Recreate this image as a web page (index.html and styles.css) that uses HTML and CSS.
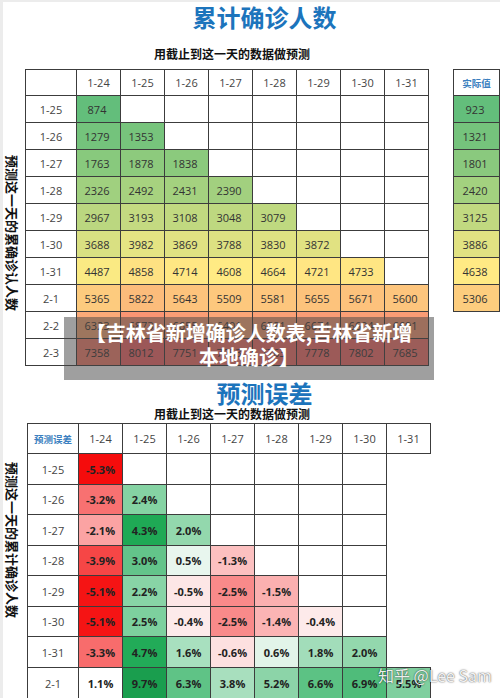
FILE: index.html
```html
<!DOCTYPE html>
<html>
  <head>
    <meta charset="utf-8">
    <link rel="stylesheet" href="styles.css">
  </head>
  <body>
    <div class="page">
      <h1 class="title">累计确诊人数</h1>
      <div class="subtitle">用截止到这一天的数据做预测</div>

      <div class="sheet">
        <div class="side side-top"><span>预测这一天的累确诊认人数</span></div>
        <div class="grid grid-total">
          <div class="cell"></div>
          <div class="cell hd">1-24</div><div class="cell hd">1-25</div><div class="cell hd">1-26</div><div class="cell hd">1-27</div>
          <div class="cell hd">1-28</div><div class="cell hd">1-29</div><div class="cell hd">1-30</div><div class="cell hd">1-31</div>

          <div class="cell rh">1-25</div>
          <div class="cell num" style="background:#63be7b">874</div>
          <div class="cell"></div><div class="cell"></div><div class="cell"></div><div class="cell"></div><div class="cell"></div><div class="cell"></div><div class="cell"></div>

          <div class="cell rh">1-26</div>
          <div class="cell num" style="background:#74c37c">1279</div>
          <div class="cell num" style="background:#77c47c">1353</div>
          <div class="cell"></div><div class="cell"></div><div class="cell"></div><div class="cell"></div><div class="cell"></div><div class="cell"></div>

          <div class="cell rh">1-27</div>
          <div class="cell num" style="background:#88c97d">1763</div>
          <div class="cell num" style="background:#8dca7d">1878</div>
          <div class="cell num" style="background:#8bca7d">1838</div>
          <div class="cell"></div><div class="cell"></div><div class="cell"></div><div class="cell"></div><div class="cell"></div>

          <div class="cell rh">1-28</div>
          <div class="cell num" style="background:#a0d07f">2326</div>
          <div class="cell num" style="background:#a7d27f">2492</div>
          <div class="cell num" style="background:#a4d17f">2431</div>
          <div class="cell num" style="background:#a2d07f">2390</div>
          <div class="cell"></div><div class="cell"></div><div class="cell"></div><div class="cell"></div>

          <div class="cell rh">1-29</div>
          <div class="cell num" style="background:#bbd780">2967</div>
          <div class="cell num" style="background:#c4da81">3193</div>
          <div class="cell num" style="background:#c1d980">3108</div>
          <div class="cell num" style="background:#bed880">3048</div>
          <div class="cell num" style="background:#bfd980">3079</div>
          <div class="cell"></div><div class="cell"></div><div class="cell"></div>

          <div class="cell rh">1-30</div>
          <div class="cell num" style="background:#d9e082">3688</div>
          <div class="cell num" style="background:#e5e483">3982</div>
          <div class="cell num" style="background:#e0e282">3869</div>
          <div class="cell num" style="background:#dde182">3788</div>
          <div class="cell num" style="background:#dfe282">3830</div>
          <div class="cell num" style="background:#e1e282">3872</div>
          <div class="cell"></div><div class="cell"></div>

          <div class="cell rh">1-31</div>
          <div class="cell num" style="background:#faea83">4487</div>
          <div class="cell num" style="background:#fee182">4858</div>
          <div class="cell num" style="background:#ffe783">4714</div>
          <div class="cell num" style="background:#ffeb84">4608</div>
          <div class="cell num" style="background:#ffe984">4664</div>
          <div class="cell num" style="background:#ffe683">4721</div>
          <div class="cell num" style="background:#ffe683">4733</div>
          <div class="cell"></div>

          <div class="cell rh">2-1</div>
          <div class="cell num" style="background:#fdcb7e">5365</div>
          <div class="cell num" style="background:#fcbc7b">5822</div>
          <div class="cell num" style="background:#fdc37c">5643</div>
          <div class="cell num" style="background:#fdc87d">5509</div>
          <div class="cell num" style="background:#fdc67d">5581</div>
          <div class="cell num" style="background:#fdc37c">5655</div>
          <div class="cell num" style="background:#fdc27c">5671</div>
          <div class="cell num" style="background:#fdc57d">5600</div>

          <div class="cell rh">2-2</div>
          <div class="cell num" style="background:#fbaa78">6323</div>
          <div class="cell num" style="background:#fa9573">6873</div>
          <div class="cell num" style="background:#fa9d75">6655</div>
          <div class="cell num" style="background:#fba677">6401</div>
          <div class="cell num" style="background:#faa076">6581</div>
          <div class="cell num" style="background:#fa9c75">6674</div>
          <div class="cell num" style="background:#fa9f75">6604</div>
          <div class="cell num" style="background:#fa9c75">6691</div>

          <div class="cell rh">2-3</div>
          <div class="cell num" style="background:#f9826f">7358</div>
          <div class="cell num" style="background:#f8696b">8012</div>
          <div class="cell num" style="background:#f8716c">7751</div>
          <div class="cell num" style="background:#f8776d">7653</div>
          <div class="cell num" style="background:#f8716c">7763</div>
          <div class="cell num" style="background:#f8706c">7778</div>
          <div class="cell num" style="background:#f86e6c">7802</div>
          <div class="cell num" style="background:#f8756d">7685</div>
        </div>

        <div class="grid grid-actual">
          <div class="cell hd label">实际值</div>
          <div class="cell num" style="background:#63be7b">923</div>
          <div class="cell num" style="background:#75c37c">1321</div>
          <div class="cell num" style="background:#8ac97e">1801</div>
          <div class="cell num" style="background:#a3d17f">2420</div>
          <div class="cell num" style="background:#c1d980">3125</div>
          <div class="cell num" style="background:#e1e282">3886</div>
          <div class="cell num" style="background:#ffea84">4638</div>
          <div class="cell num" style="background:#fdcd7e">5306</div>
        </div>
      </div>

      <div class="banner">【吉林省新增确诊人数表,吉林省新增本地确诊】</div>

      <h2 class="title title-err">预测误差</h2>
      <div class="subtitle subtitle-err">用截止到这一天的数据做预测</div>

      <div class="sheet sheet-err">
        <div class="side side-bottom"><span>预测这一天的累计确诊人数</span></div>
        <div class="grid grid-err">
          <div class="cell hd label">预测误差</div>
          <div class="cell hd">1-24</div><div class="cell hd">1-25</div><div class="cell hd">1-26</div><div class="cell hd">1-27</div>
          <div class="cell hd">1-28</div><div class="cell hd">1-29</div><div class="cell hd">1-30</div><div class="cell hd">1-31</div>

          <div class="cell rh">1-25</div>
          <div class="cell pct" style="background:#f50c0c">-5.3%</div>
          <div class="cell"></div><div class="cell"></div><div class="cell"></div><div class="cell"></div><div class="cell"></div><div class="cell"></div>
          <div class="blank"></div>

          <div class="cell rh">1-26</div>
          <div class="cell pct" style="background:#f87171">-3.2%</div>
          <div class="cell pct" style="background:#85d3a3">2.4%</div>
          <div class="cell"></div><div class="cell"></div><div class="cell"></div><div class="cell"></div><div class="cell"></div>
          <div class="blank"></div>

          <div class="cell rh">1-27</div>
          <div class="cell pct" style="background:#fba3a3">-2.1%</div>
          <div class="cell pct" style="background:#1fa955">4.3%</div>
          <div class="cell pct" style="background:#93d8ad">2.0%</div>
          <div class="cell"></div><div class="cell"></div><div class="cell"></div><div class="cell"></div>
          <div class="blank"></div>

          <div class="cell rh">1-28</div>
          <div class="cell pct" style="background:#f64646">-3.9%</div>
          <div class="cell pct" style="background:#63c48a">3.0%</div>
          <div class="cell pct" style="background:#e8f6ee">0.5%</div>
          <div class="cell pct" style="background:#fcc0c0">-1.3%</div>
          <div class="cell"></div><div class="cell"></div><div class="cell"></div>
          <div class="blank"></div>

          <div class="cell rh">1-29</div>
          <div class="cell pct" style="background:#f51414">-5.1%</div>
          <div class="cell pct" style="background:#88d4a6">2.2%</div>
          <div class="cell pct" style="background:#fde6e6">-0.5%</div>
          <div class="cell pct" style="background:#f98a8a">-2.5%</div>
          <div class="cell pct" style="background:#fbb0b0">-1.5%</div>
          <div class="cell"></div><div class="cell"></div>
          <div class="blank"></div>

          <div class="cell rh">1-30</div>
          <div class="cell pct" style="background:#f51414">-5.1%</div>
          <div class="cell pct" style="background:#7dd09e">2.5%</div>
          <div class="cell pct" style="background:#fdeaea">-0.4%</div>
          <div class="cell pct" style="background:#f98a8a">-2.5%</div>
          <div class="cell pct" style="background:#fbb4b4">-1.4%</div>
          <div class="cell pct" style="background:#fdeaea">-0.4%</div>
          <div class="cell"></div>
          <div class="blank"></div>

          <div class="cell rh">1-31</div>
          <div class="cell pct" style="background:#f86c6c">-3.3%</div>
          <div class="cell pct" style="background:#22ab58">4.7%</div>
          <div class="cell pct" style="background:#a8e0bf">1.6%</div>
          <div class="cell pct" style="background:#fde0e0">-0.6%</div>
          <div class="cell pct" style="background:#e2f4e9">0.6%</div>
          <div class="cell pct" style="background:#a2ddba">1.8%</div>
          <div class="cell pct" style="background:#93d8ad">2.0%</div>
          <div class="blank blank-end"></div>

          <div class="cell rh">2-1</div>
          <div class="cell pct">1.1%</div>
          <div class="cell pct" style="background:#1a9e4e">9.7%</div>
          <div class="cell pct" style="background:#5fc386">6.3%</div>
          <div class="cell pct" style="background:#a8dfbe">3.8%</div>
          <div class="cell pct" style="background:#8cd4a8">5.2%</div>
          <div class="cell pct" style="background:#5cc284">6.6%</div>
          <div class="cell pct" style="background:#4fbc7a">6.9%</div>
          <div class="cell pct" style="background:#7fcf9f">5.5%</div>
        </div>
      </div>

      <div class="watermark">知乎 @Lee Sam</div>
    </div>
  </body>
</html>
```

FILE: styles.css
```css
html, body {
  margin: 0;
  padding: 0;
  overflow: hidden;
  background: #fff;
}
.page {
  position: relative;
  width: 500px;
  height: 698px;
  box-sizing: border-box;
  overflow: hidden;
  border-left: 3px solid #ececec;
  border-top: 2px solid #ececec;
  font-family: "Noto Sans CJK SC", "Open Sans", sans-serif;
  color: #333;
}
.title {
  margin: 0;
  padding-left: 26px;
  text-align: center;
  font-size: 24px;
  line-height: 30px;
  font-weight: bold;
  color: #1c74bc;
}
.subtitle {
  margin-top: 14px;
  padding-right: 39px;
  text-align: center;
  font-size: 12px;
  line-height: 16px;
  font-weight: bold;
  color: #111;
}
.sheet {
  display: flex;
  align-items: flex-start;
  margin-top: 7px;
}
.side {
  width: 22px;
  padding-left: 2px;
}
.side span {
  display: block;
  writing-mode: vertical-rl;
  text-orientation: sideways;
  font-size: 13px;
  line-height: 14px;
  font-weight: bold;
  color: #111;
}
.side-top {
  padding-top: 86px;
}
.side-bottom {
  padding-top: 39px;
}
.grid {
  display: grid;
  border-top: 1px solid #3c3c3c;
  border-left: 1px solid #3c3c3c;
}
.grid-total {
  grid-template-columns: 51px repeat(8, 44px);
  grid-template-rows: 26px repeat(10, 27px);
}
.grid-actual {
  margin-left: 24px;
  grid-template-columns: 46px;
  grid-template-rows: 26px repeat(8, 27px);
}
.grid-err {
  grid-template-columns: 51px repeat(8, 44px);
  grid-template-rows: 30px 31px 30px 31px 30px 31px 30px 31px 31px;
}
.cell {
  box-sizing: border-box;
  display: flex;
  align-items: center;
  justify-content: center;
  border-right: 1px solid #3c3c3c;
  border-bottom: 1px solid #3c3c3c;
  background: #fff;
  font-family: "Open Sans", "Noto Sans CJK SC", sans-serif;
  font-size: 11px;
  color: #444;
}
.blank {
  background: #fff;
}
.blank-end {
  border-bottom: 1px solid #3c3c3c;
}
.hd {
  color: #444;
}
.hd.label {
  font-family: "Noto Sans CJK SC", sans-serif;
  font-size: 9.5px;
  font-weight: bold;
  color: #3b7fc0;
}
.num {
  padding-right: 3px;
  color: #333;
}
.pct {
  font-weight: bold;
  color: #222;
}
.title-err {
  margin-top: 14px;
  line-height: 26px;
}
.subtitle-err {
  margin-top: 1px;
  line-height: 14px;
}
.sheet-err {
  margin-top: 2px;
}
.banner {
  position: absolute;
  left: 61px;
  top: 315px;
  width: 370px;
  height: 63px;
  box-sizing: border-box;
  padding: 4px 14px 0;
  background: rgba(70, 70, 70, 0.52);
  color: #fff;
  font-size: 20px;
  line-height: 24px;
  font-weight: bold;
  text-align: center;
}
.watermark {
  position: absolute;
  left: 375px;
  top: 663px;
  font-size: 16px;
  line-height: 20px;
  color: rgba(255, 255, 255, 0.92);
  text-shadow: 0 0 2px rgba(0, 0, 0, 0.55), 0 0 1px rgba(0, 0, 0, 0.4);
}
```
